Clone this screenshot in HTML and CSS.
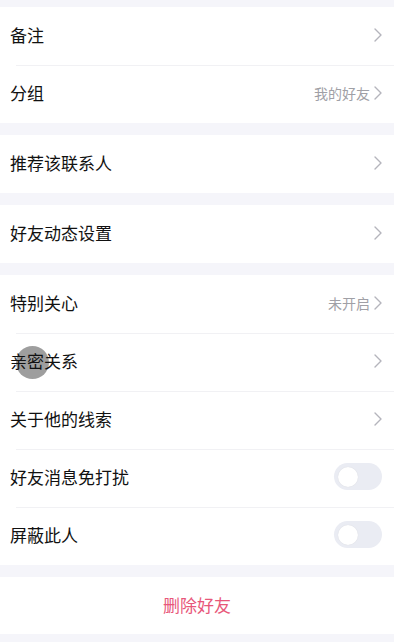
FILE: index.html
```html
<!DOCTYPE html>
<html lang="zh">
<head>
<meta charset="utf-8">
<link rel="stylesheet" href="styles.css">
</head>
<body>
<div class="page">
  <div class="group g1">
    <div class="row"><span class="label">备注</span><span class="right"><svg class="chev" viewBox="0 0 8 14"><path d="M1 1l6 6-6 6"/></svg></span></div>
    <div class="row"><span class="label">分组</span><span class="right"><span class="value">我的好友</span><svg class="chev" viewBox="0 0 8 14"><path d="M1 1l6 6-6 6"/></svg></span></div>
  </div>
  <div class="group">
    <div class="row"><span class="label">推荐该联系人</span><span class="right"><svg class="chev" viewBox="0 0 8 14"><path d="M1 1l6 6-6 6"/></svg></span></div>
  </div>
  <div class="group">
    <div class="row"><span class="label">好友动态设置</span><span class="right"><svg class="chev" viewBox="0 0 8 14"><path d="M1 1l6 6-6 6"/></svg></span></div>
  </div>
  <div class="group">
    <div class="row"><span class="label">特别关心</span><span class="right"><span class="value">未开启</span><svg class="chev" viewBox="0 0 8 14"><path d="M1 1l6 6-6 6"/></svg></span></div>
    <div class="row touchrow"><span class="touch"></span><span class="label">亲密关系</span><span class="right"><svg class="chev" viewBox="0 0 8 14"><path d="M1 1l6 6-6 6"/></svg></span></div>
    <div class="row"><span class="label">关于他的线索</span><span class="right"><svg class="chev" viewBox="0 0 8 14"><path d="M1 1l6 6-6 6"/></svg></span></div>
    <div class="row"><span class="label">好友消息免打扰</span><span class="right"><span class="toggle"><span class="knob"></span></span></span></div>
    <div class="row"><span class="label">屏蔽此人</span><span class="right"><span class="toggle"><span class="knob"></span></span></span></div>
  </div>
  <div class="group">
    <div class="row danger">删除好友</div>
  </div>
</div>
</body>
</html>
```
FILE: styles.css
```css
* { box-sizing: border-box; }
html, body { margin: 0; padding: 0; }
body {
  background: #f5f5fa;
  font-family: "Noto Sans CJK SC", "Noto Sans", sans-serif;
  color: #111;
}
.page {
  display: flex;
  flex-direction: column;
  gap: 12px;
  padding-top: 7px;
}
.group {
  background: #fff;
  display: flex;
  flex-direction: column;
}
.row {
  position: relative;
  height: 58px;
  display: flex;
  align-items: center;
  justify-content: space-between;
  padding: 0 12px 3px 10px;
}
.row + .row::before {
  content: "";
  position: absolute;
  left: 16px;
  right: 0;
  top: 0;
  height: 1px;
  background: #f1f1f4;
}
.label {
  font-size: 17px;
  line-height: 1;
  position: relative;
}
.right {
  display: flex;
  align-items: center;
  gap: 4px;
}
.value {
  font-size: 14px;
  color: #a0a0a6;
}
.chev {
  width: 8px;
  height: 14px;
  fill: none;
  stroke: #b4b4bc;
  stroke-width: 1.4;
  stroke-linecap: round;
  stroke-linejoin: round;
}
.toggle {
  width: 48px;
  height: 27px;
  border-radius: 14px;
  background: #eaecf3;
  display: flex;
  align-items: center;
  padding-left: 4px;
}
.knob {
  width: 20px;
  height: 20px;
  border-radius: 50%;
  background: #fff;
  box-shadow: 0 0 1px rgba(0, 0, 0, 0.12);
}
.danger {
  justify-content: center;
  color: #e8577a;
  font-size: 17px;
  padding: 0 0 3px 0;
  height: 57px;
}
.touch {
  position: absolute;
  left: 16px;
  top: 13px;
  width: 33px;
  height: 33px;
  border-radius: 50%;
  background: #999;
  opacity: 0.95;
}
```
